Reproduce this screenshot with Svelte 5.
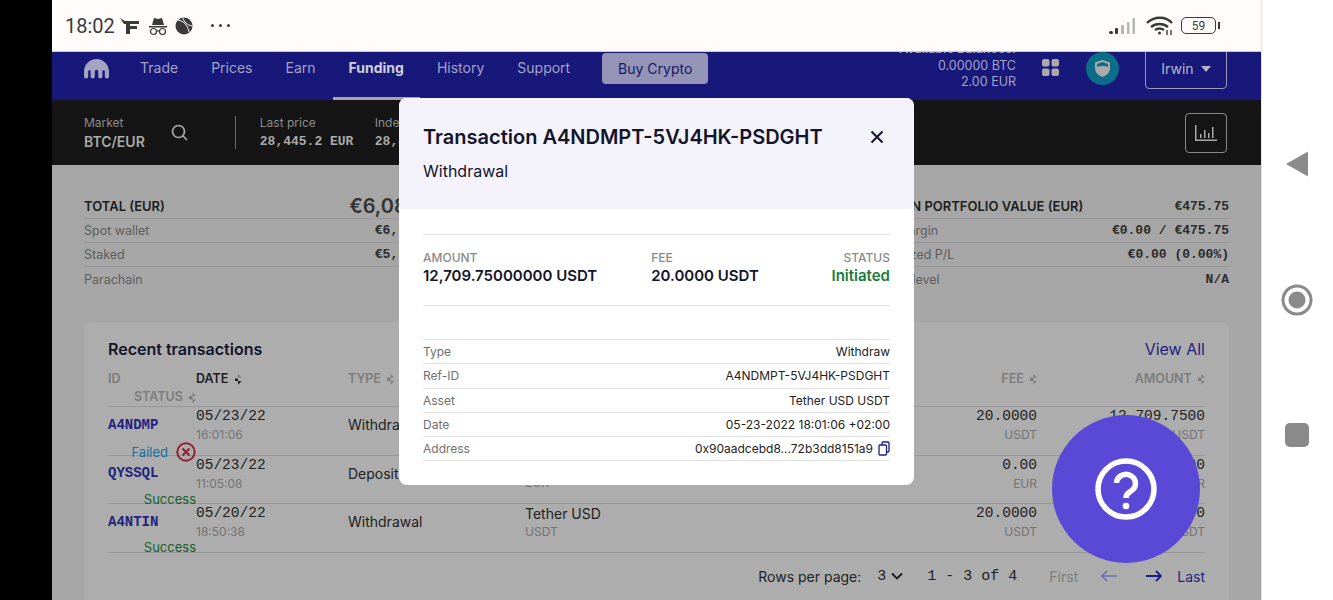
<script>
  const navItems = ['Trade', 'Prices', 'Earn', 'Funding', 'History', 'Support'];
  const left = [['Spot wallet', '€6,081.75'], ['Staked', '€5,606.00'], ['Parachain', '€0.00']];
  const right = [['Free margin', '€0.00 / €475.75'], ['Unrealized P/L', '€0.00 (0.00%)'], ['Margin level', 'N/A']];
  const rows = [
    { id: 'A4NDMP', date: '05/23/22', time: '16:01:06', type: 'Withdrawal', asset: 'Tether USD', code: 'USDT', fee: '20.0000', amount: '12,709.7500', amountCode: 'USDT', status: 'Failed', cls: 'failed' },
    { id: 'QYSSQL', date: '05/23/22', time: '11:05:08', type: 'Deposit', asset: 'Euro', code: 'EUR', fee: '0.00', amount: '12,000.00', amountCode: 'EUR', status: 'Success', cls: 'ok' },
    { id: 'A4NTIN', date: '05/20/22', time: '18:50:38', type: 'Withdrawal', asset: 'Tether USD', code: 'USDT', fee: '20.0000', amount: '7,971.0000', amountCode: 'USDT', status: 'Success', cls: 'ok' }
  ];
  const details = [['Type', 'Withdraw'], ['Ref-ID', 'A4NDMPT-5VJ4HK-PSDGHT'], ['Asset', 'Tether USD USDT'], ['Date', '05-23-2022 18:01:06 +02:00']];
</script>

<div class="device">
  <div class="bezel"></div>
  <div class="phone">
    <header class="status">
      <span class="clock">18:02</span>
      <svg class="si" width="22" height="20" viewBox="0 0 22 20"><path d="M1 2l5 3h14v3H11v2h7v3h-7v5H7V8H5z" fill="#3a3a3a"/></svg>
      <svg class="si" width="20" height="20" viewBox="0 0 20 20" fill="#3a3a3a"><path d="M4 9l2-7 4 1 4-1 2 7z"/><rect x="1" y="10" width="18" height="1.5"/><g fill="none" stroke="#3a3a3a" stroke-width="1.2"><circle cx="5.5" cy="15.5" r="3"/><circle cx="14.500" cy="15.500" r="3"/><path d="M8.500 15h3"/></g></svg>
      <svg class="si" width="18" height="18" viewBox="0 0 18 18"><circle cx="9" cy="9" r="8.500" fill="#3a3a3a"/><path d="M3 3c6 1 10 6 11 12M8 1c1 4 4 7 9 8" fill="none" stroke="#fff" stroke-width="1"/></svg>
      <span class="dots"><i></i><i></i><i></i></span>
      <span class="spacer"></span>
      <svg width="27" height="18" viewBox="0 0 27 18"><g fill="#3a3a3a"><rect x="0" y="14" width="4" height="3" rx="1.500"/><rect x="6" y="11" width="3" height="6" rx="1"/></g><g fill="#b5b5b5"><rect x="12" y="8" width="3" height="9" rx="1"/><rect x="18" y="5" width="2.500" height="12" rx="1"/><rect x="23.500" y="1" width="2.500" height="16" rx="1"/></g></svg>
      <svg class="wifi" width="28" height="20" viewBox="0 0 28 20" fill="none" stroke="#3a3a3a" stroke-width="2.400"><path d="M1 7c7-7 19-7 25 0M5 11c5-4 12-4 17 0M9 14c3-2 6-2 9 0"/><circle cx="13.500" cy="17" r="1.500" fill="#3a3a3a" stroke="none"/><path d="M21 14v5M25 14v5" stroke-width="1.400"/></svg>
      <span class="battery"><span>59</span></span>
    </header>

    <nav class="topnav">
      <svg class="logo" width="25" height="20" viewBox="0 0 25 20"><path d="M12.500 0C5.600 0 0 5.600 0 12.500V17.500a2.100 2.100 0 0 0 4.200 0V12.500a1.200 1.200 0 0 1 2.400 0V17.500a2.100 2.100 0 0 0 4.200 0V12.500a1.700 1.700 0 0 1 3.400 0V17.500a2.100 2.100 0 0 0 4.200 0V12.500a1.200 1.200 0 0 1 2.400 0V17.500a2.100 2.100 0 0 0 4.200 0V12.500C25 5.600 19.400 0 12.500 0z" fill="#a3a3c4"/></svg>
      <ul class="links">
        {#each navItems as item}
          <li class:active={item === 'Funding'}>{item}</li>
        {/each}
      </ul>
      <span class="buy">Buy Crypto</span>
      <span class="spacer"></span>
      <div class="balances">
        <b>Available Balances:</b>
        <span>0.00000 BTC</span>
        <span>2.00 EUR</span>
      </div>
      <svg class="apps" width="17" height="17" viewBox="0 0 17 17" fill="#aaa"><rect width="7.500" height="7.500" rx="2"/><rect x="9.500" width="7.500" height="7.500" rx="2"/><rect y="9.500" width="7.500" height="7.500" rx="2"/><rect x="9.500" y="9.500" width="7.500" height="7.500" rx="2"/></svg>
      <span class="shield">
        <svg width="17" height="19" viewBox="0 0 17 19"><path d="M8.500 1L16 3.500V9c0 4-3 7.500-7.500 9C4 16.500 1 13 1 9V3.500z" fill="#aaa"/><path d="M3 5l5.500-2L14 5v3c-3-1.200-8-1.200-11 0z" fill="#0b6d87"/></svg>
      </span>
      <span class="user">Irwin <i class="caret"></i></span>
    </nav>

    <section class="market">
      <div class="stat"><small>Market</small><b class="pair">BTC/EUR</b></div>
      <svg class="search" width="17" height="17" viewBox="0 0 17 17" fill="none" stroke="#aaa" stroke-width="1.700"><circle cx="7.500" cy="7.500" r="6"/><path d="M12 12l4 4"/></svg>
      <span class="divider"></span>
      <div class="stat w115"><small>Last price</small><b>28,445.2 EUR</b></div>
      <div class="stat w115"><small>Index price</small><b>28,441.0 EUR</b></div>
      <div class="stat w115"><small>High</small><b>29,100.0 EUR</b></div>
      <div class="stat w115"><small>Low</small><b>28,120.0 EUR</b></div>
      <div class="stat"><small>Volume</small><b>1,281.0 EUR</b></div>
      <span class="spacer"></span>
      <span class="chart">
        <svg width="22" height="16" viewBox="0 0 22 16" fill="#aaa"><rect x="0" y="0" width="1.500" height="16"/><rect x="0" y="14.500" width="22" height="1.500"/><rect x="5" y="9" width="1.500" height="4"/><rect x="9" y="5" width="1.500" height="8"/><rect x="13" y="8" width="1.500" height="5"/><rect x="17" y="2" width="1.500" height="11"/></svg>
      </span>
    </section>

    <main class="page">
      <div class="summary">
        <div class="col">
          <div class="row head"><b>TOTAL (EUR)</b><strong>€6,081.75</strong></div>
          {#each left as [k, v]}
            <div class="row"><span>{k}</span><em>{v}</em></div>
          {/each}
        </div>
        <div class="col">
          <div class="row head"><b>MARGIN PORTFOLIO VALUE (EUR)</b><em class="strong">€475.75</em></div>
          {#each right as [k, v]}
            <div class="row"><span>{k}</span><em>{v}</em></div>
          {/each}
        </div>
      </div>

      <div class="card">
        <div class="card-head"><h2>Recent transactions</h2><a href="#top">View All</a></div>
        <div class="grid thead">
          <span class="muted-id">ID</span>
          <span class="sorted">DATE <i class="sort on"></i></span>
          <span>TYPE <i class="sort"></i></span>
          <span>ASSET <i class="sort"></i></span>
          <span class="r">FEE <i class="sort"></i></span>
          <span class="r">AMOUNT <i class="sort"></i></span>
          <span class="r">STATUS <i class="sort"></i></span>
        </div>
        {#each rows as r}
          <div class="grid trow">
            <a class="tid" href="#top">{r.id}</a>
            <div class="cell"><span class="d">{r.date}</span><small>{r.time}</small></div>
            <div class="type">{r.type}</div>
            <div class="cell"><span>{r.asset}</span><small>{r.code}</small></div>
            <div class="cell r"><span class="d">{r.fee}</span><small>{r.code}</small></div>
            <div class="cell r"><span class="d">{r.amount}</span><small>{r.amountCode}</small></div>
            <div class="st {r.cls}">
              {r.status}
              {#if r.cls === 'failed'}
                <svg width="20" height="20" viewBox="0 0 20 20" fill="none" stroke="#8f1f32" stroke-width="2"><circle cx="10" cy="10" r="8.700"/><path d="M6.500 6.500l7 7M13.500 6.500l-7 7"/></svg>
              {/if}
            </div>
          </div>
        {/each}
        <div class="pager">
          <span class="rpp">Rows per page:</span>
          <span class="num">3</span>
          <svg width="12" height="8" viewBox="0 0 12 8" fill="none" stroke="#1c1c1c" stroke-width="1.800"><path d="M1 1.500l5 5 5-5"/></svg>
          <span class="range">1 - 3 of 4</span>
          <span class="first">First</span>
          <svg width="16" height="12" viewBox="0 0 16 12" fill="none" stroke="#6c6cb0" stroke-width="1.500"><path d="M16 6H1M6 1L1 6l5 5"/></svg>
          <svg width="16" height="12" viewBox="0 0 16 12" fill="none" stroke="#1b1b8a" stroke-width="1.800"><path d="M0 6h15M10 1l5 5-5 5"/></svg>
          <a href="#top">Last</a>
        </div>
      </div>
    </main>

    <div class="modal">
      <div class="m-head">
        <div class="m-title"><h1>Transaction A4NDMPT-5VJ4HK-PSDGHT</h1>
          <svg width="14" height="14" viewBox="0 0 14 14" stroke="#14142b" stroke-width="2"><path d="M1.500 1.500l11 11M12.500 1.500l-11 11"/></svg>
        </div>
        <p>Withdrawal</p>
      </div>
      <div class="m-body">
        <div class="facts">
          <div><small>AMOUNT</small><b>12,709.75000000 USDT</b></div>
          <div class="fee"><small>FEE</small><b>20.0000 USDT</b></div>
          <div class="right"><small>STATUS</small><b class="green">Initiated</b></div>
        </div>
        <div class="dl">
          {#each details as [k, v]}
            <div class="dr"><span>{k}</span><em>{v}</em></div>
          {/each}
          <div class="dr"><span>Address</span><em>0x90aadcebd8...72b3dd8151a9
            <svg width="12" height="15" viewBox="0 0 12 15" fill="none" stroke="#1b1b8a" stroke-width="1.300"><rect x="1" y="4" width="7.500" height="10" rx="1"/><path d="M4 4V2a1 1 0 0 1 1-1h5a1 1 0 0 1 1 1v8a1 1 0 0 1-1 1H8.500"/></svg>
          </em></div>
        </div>
      </div>
    </div>

    <button class="help" aria-label="Help">
      <svg width="62" height="62" viewBox="0 0 62 62" fill="none" stroke="#fff" stroke-width="5.500"><circle cx="31" cy="31" r="28"/><path d="M21.500 25a9.500 9 0 1 1 14.500 8c-3 2-5 3-5 7" stroke-width="5.500"/><circle cx="31" cy="48" r="3.300" fill="#fff" stroke="none"/></svg>
    </button>
  </div>

  <aside class="softkeys">
    <svg width="24" height="26" viewBox="0 0 24 26"><path d="M23 0.500V25.500L1 13z" fill="#8a8a8a"/></svg>
    <svg width="32" height="32" viewBox="0 0 32 32"><circle cx="16" cy="16" r="14" fill="none" stroke="#8a8a8a" stroke-width="3"/><circle cx="16" cy="16" r="8.500" fill="#8a8a8a"/></svg>
    <span class="square"></span>
  </aside>
</div>

<style>
  :global(body) { margin: 0; background: #000; }
  .device { display: flex; width: 1333px; height: 600px; overflow: hidden; font-family: Inter, "Noto Sans", sans-serif; color: #1d1d1d; }
  .bezel { width: 52px; flex: none; background: #000; }
  .phone { position: relative; width: 1209px; flex: none; display: flex; flex-direction: column; background: #a6a6a6; overflow: hidden; }
  .softkeys { flex: 1; background: #fff; border-left: 1px solid #e4e4e4; display: flex; flex-direction: column; align-items: center; padding-top: 151px; padding-right: 2px; }
  .softkeys svg:nth-child(2) { margin-top: 107px; }
  .square { width: 24px; height: 24px; border-radius: 5px; background: #8a8a8a; margin-top: 107px; }
  .spacer { flex: 1; }

  .status { height: 51px; flex: none; background: #fffcfb; border-bottom: 1px solid #c8c8dc; display: flex; align-items: center; padding: 0 45px 0 13px; gap: 7px; }
  .clock { font-size: 20px; color: #3a3a3a; font-family: Roboto, sans-serif; margin-right: -3px; }
  .si { flex: none; }
  .dots { display: flex; gap: 5px; margin-left: 11px; }
  .dots i { width: 3px; height: 3px; border-radius: 50%; background: #3a3a3a; }
  .wifi { margin-left: 3px; }
  .battery { position: relative; width: 33px; height: 15px; border: 1.500px solid #3a3a3a; border-radius: 5px; box-sizing: content-box; display: flex; align-items: center; justify-content: center; font-size: 12px; color: #3a3a3a; font-family: Roboto, sans-serif; }
  .battery::after { content: ''; position: absolute; right: -5px; top: 4px; width: 2px; height: 7px; background: #3a3a3a; }

  .topnav { height: 48px; flex: none; background: #18187a; display: flex; padding: 0 34px 0 32px; align-items: flex-start; overflow: hidden; }
  .logo { margin-top: 7px; flex: none; }
  .links { display: flex; list-style: none; margin: 0 0 0 31px; padding: 0; font-size: 14px; color: #a3a3c4; }
  .links li { padding: 7px 16px 0; height: 48px; box-sizing: border-box; line-height: 17px; margin-left: -16px; margin-right: 0; }
  .links li + li { margin-left: 1px; }
  .links li.active { color: #cfcfd8; font-weight: 700; border-bottom: 3px solid #a6a6a6; }
  .buy { margin: 1px 0 0 16px; width: 106px; height: 31px; box-sizing: border-box; background: #9494b6; border-radius: 4px; color: #17176a; font-size: 14px; display: flex; align-items: center; justify-content: center; }
  .balances { display: flex; flex-direction: column; align-items: flex-end; margin-top: -11px; font-size: 12.500px; line-height: 16.500px; color: #a3a3c4; }
  .balances b { font-weight: 600; }
  .apps { margin: 7px 0 0 26px; flex: none; }
  .shield { width: 33px; height: 33px; margin: 0 0 0 27px; border-radius: 50%; background: #0b6d87; display: flex; align-items: center; justify-content: center; flex: none; }
  .user { margin: -4px 0 0 26px; width: 82px; height: 41px; box-sizing: border-box; border: 1px solid #9a9ab8; border-radius: 4px; display: flex; align-items: center; justify-content: center; gap: 7px; color: #b5b5c8; font-size: 14px; }
  .caret { width: 0; height: 0; border: 5px solid transparent; border-top: 6px solid #b5b5c8; border-bottom: 0; }

  .market { height: 65px; flex: none; background: #151515; display: flex; align-items: center; padding: 0 34px 0 32px; color: #aaa; }
  .stat { display: flex; flex-direction: column; gap: 3px; }
  .stat small { font-size: 12px; color: #8c8c8c; line-height: 15px; }
  .stat b { font: 600 13px/17px "Liberation Mono", monospace; color: #aaa; }
  .stat .pair { font: 600 14px/17px Inter, sans-serif; }
  .w115 { width: 115px; overflow: hidden; white-space: nowrap; }
  .search { margin-left: 26px; }
  .divider { width: 1px; height: 33px; background: #6a6a6a; margin: 0 24px 0 47px; }
  .chart { width: 42px; height: 40px; box-sizing: border-box; border: 1px solid #888; border-radius: 4px; display: flex; align-items: center; justify-content: center; }

  .page { flex: 1; padding: 29px 32px 0; min-height: 0; }
  .summary { display: flex; justify-content: space-between; }
  .col { width: 361px; }
  .row { display: flex; justify-content: space-between; align-items: center; height: 24px; border-bottom: 1px solid #969696; box-sizing: border-box; font-size: 12.500px; color: #5d5d5d; white-space: nowrap; }
  .row:last-child { border-bottom: 0; }
  .row.head { height: 25px; color: #1d1d1d; }
  .row b { font-weight: 600; font-size: 13px; }
  .row strong { font-size: 20px; font-weight: 600; color: #333; }
  .row em { font: normal 600 13px "Liberation Mono", monospace; color: #2b2b2b; }

  .card { margin-top: 31px; background: #adadad; border-radius: 8px; padding: 14px 24px 0; height: 290px; box-sizing: content-box; }
  .card-head { display: flex; justify-content: space-between; align-items: center; height: 26px; }
  h2 { font-size: 16px; font-weight: 600; margin: 0; color: #14142b; }
  .card-head a { font-size: 16px; color: #23237f; text-decoration: none; }
  .grid { display: grid; grid-template-columns: 88px 152px 177px 335px 177px 168px; align-items: center; border-bottom: 1px solid #979797; }
  .thead { height: 45px; margin-top: 0; font-size: 12.500px; font-weight: 600; color: #7c7c7c; padding-top: 7px; box-sizing: border-box; }
  .sorted { color: #1d1d1d; }
  .sort { display: inline-block; width: 7px; height: 11px; margin-left: 3px; vertical-align: -2px; background: linear-gradient(#7c7c7c,#7c7c7c) ; clip-path: polygon(50% 0, 100% 35%, 0 35%, 0 65%, 100% 65%, 50% 100%); }
  .sort.on { background: linear-gradient(#7c7c7c 50%, #1d1d1d 50%); }
  .r { text-align: right; }
  .trow { height: 48.500px; box-sizing: border-box; }
  .tid { font: 600 14px "Liberation Mono", monospace; color: #23237f; text-decoration: none; }
  .cell { display: flex; flex-direction: column; gap: 2px; font-size: 14px; color: #222; }
  .cell.r { align-items: flex-end; }
  .cell .d { font: 14.500px/18px "Liberation Mono", monospace; }
  .cell small { font-size: 12px; line-height: 15px; color: #737373; }
  .type { font-size: 14px; color: #222; }
  .st { font-size: 13px; display: flex; justify-content: flex-end; align-items: center; gap: 8px; }
  .failed { color: #1f6d9d; }
  .ok { color: #16602b; }
  .pager { display: flex; justify-content: flex-end; align-items: center; height: 47px; font-size: 14px; color: #222; }
  .num { margin-left: 16px; font-family: "Liberation Mono", monospace; font-size: 15px; }
  .pager svg:nth-of-type(1) { margin-left: 5px; }
  .range { margin-left: 24px; font-family: "Liberation Mono", monospace; font-size: 15px; }
  .first { margin-left: 32px; color: #7d7d7d; }
  .pager svg:nth-of-type(2) { margin-left: 23px; }
  .pager svg:nth-of-type(3) { margin-left: 29px; }
  .pager a { margin-left: 15px; color: #23237f; text-decoration: none; }

  .modal { position: absolute; left: 347px; top: 98px; width: 515px; height: 387px; background: #fff; border-radius: 8px; overflow: hidden; }
  .m-head { height: 111px; background: #f4f3fb; padding: 24px 24px 0; box-sizing: border-box; }
  .m-title { display: flex; justify-content: space-between; align-items: center; height: 30px; padding-right: 6px; }
  h1 { font-size: 20px; font-weight: 600; margin: 0; color: #14142b; white-space: nowrap; }
  .m-head p { margin: 9px 0 0; font-size: 16px; color: #14142b; }
  .m-body { padding: 25px 24px 0; }
  .facts { height: 72px; box-sizing: border-box; border: solid #e2e2e2; border-width: 1px 0; display: flex; padding-top: 15px; }
  .facts div { display: flex; flex-direction: column; gap: 1px; }
  .facts .fee { margin-left: 54px; }
  .facts .right { margin-left: auto; align-items: flex-end; }
  .facts small { font-size: 12px; font-weight: 500; color: #8a8a8a; line-height: 15px; }
  .facts b { font-size: 15px; font-weight: 600; color: #14142b; line-height: 20px; white-space: nowrap; }
  .facts .green { color: #1b7b3a; }
  .dl { margin-top: 33px; border-top: 1px solid #e2e2e2; }
  .dr { display: flex; justify-content: space-between; align-items: center; height: 24.300px; box-sizing: border-box; border-bottom: 1px solid #e2e2e2; font-size: 12px; color: #6f6f6f; }
  .dr em { font-style: normal; font-size: 12px; color: #222; display: flex; align-items: center; gap: 5px; }

  .help { position: absolute; left: 1000px; top: 415px; width: 148px; height: 148px; border-radius: 50%; border: 0; padding: 0; background: #5a49d6; display: flex; align-items: center; justify-content: center; }
</style>
